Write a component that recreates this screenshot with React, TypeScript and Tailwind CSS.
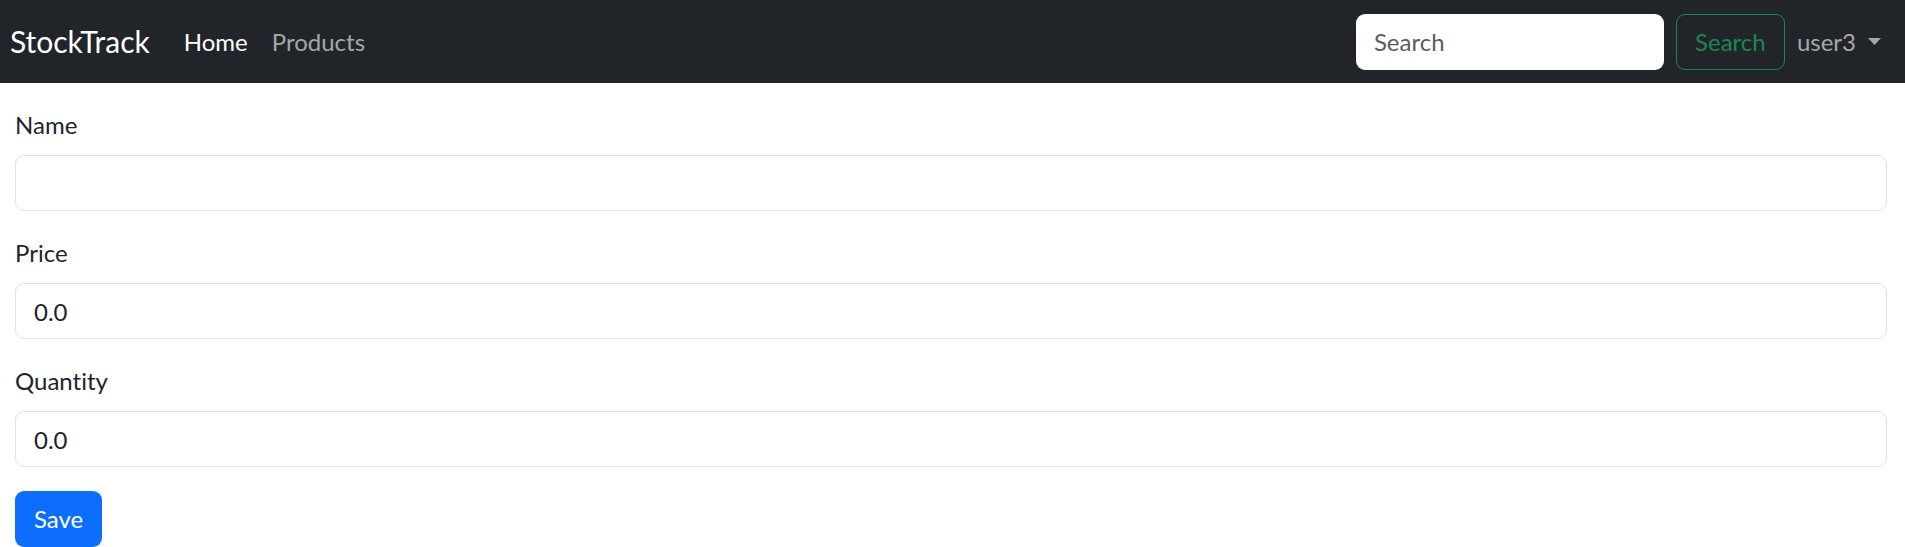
const font = { fontFamily: 'Lato, "Noto Sans", sans-serif' };

function Field({ label, value }: { label: string; value: string }) {
  return (
    <div className="mb-[24px]">
      <label className="block text-[24px] leading-[36px] mb-[12px] text-[#212529]">{label}</label>
      <input
        className="block w-full h-[56px] px-[18px] text-[24px] text-[#212529] bg-white border border-[#dee2e6] rounded-[9px] outline-none"
        defaultValue={value}
      />
    </div>
  );
}

export default function App() {
  return (
    <div style={font} className="min-h-[547px] bg-white [font-variant-ligatures:none]">
      <nav className="flex items-center h-[83px] bg-[#212529] pl-[10px] pr-[24px]">
        <span className="text-[30px] text-white">StockTrack</span>
        <div className="flex items-center ml-[22px] text-[24px]">
          <a className="px-[12px] text-white">Home</a>
          <a className="px-[12px] text-[#a6a7a9]">Products</a>
        </div>
        <div className="flex items-center ml-auto">
          <input
            placeholder="Search"
            className="w-[308px] h-[56px] px-[18px] text-[24px] bg-white rounded-[9px] outline-none placeholder:text-[#595c5f]"
          />
          <button className="ml-[12px] h-[56px] w-[109px] border border-[#198754] text-[#198754] text-[24px] rounded-[9px]">
            Search
          </button>
          <div className="ml-[12px] flex items-center text-[24px] text-[#a6a7a9]">
            user3
            <svg className="ml-[12px]" width="13" height="8" viewBox="0 0 13 8">
              <path d="M0 0 L13 0 L6.5 7 Z" fill="#a6a7a9" />
            </svg>
          </div>
        </div>
      </nav>
      <div className="pl-[15px] pr-[18px] pt-[24px]">
        <Field label="Name" value="" />
        <Field label="Price" value="0.0" />
        <Field label="Quantity" value="0.0" />
        <button className="h-[56px] w-[87px] bg-[#0d6efd] text-white text-[24px] rounded-[9px]">Save</button>
      </div>
    </div>
  );
}
